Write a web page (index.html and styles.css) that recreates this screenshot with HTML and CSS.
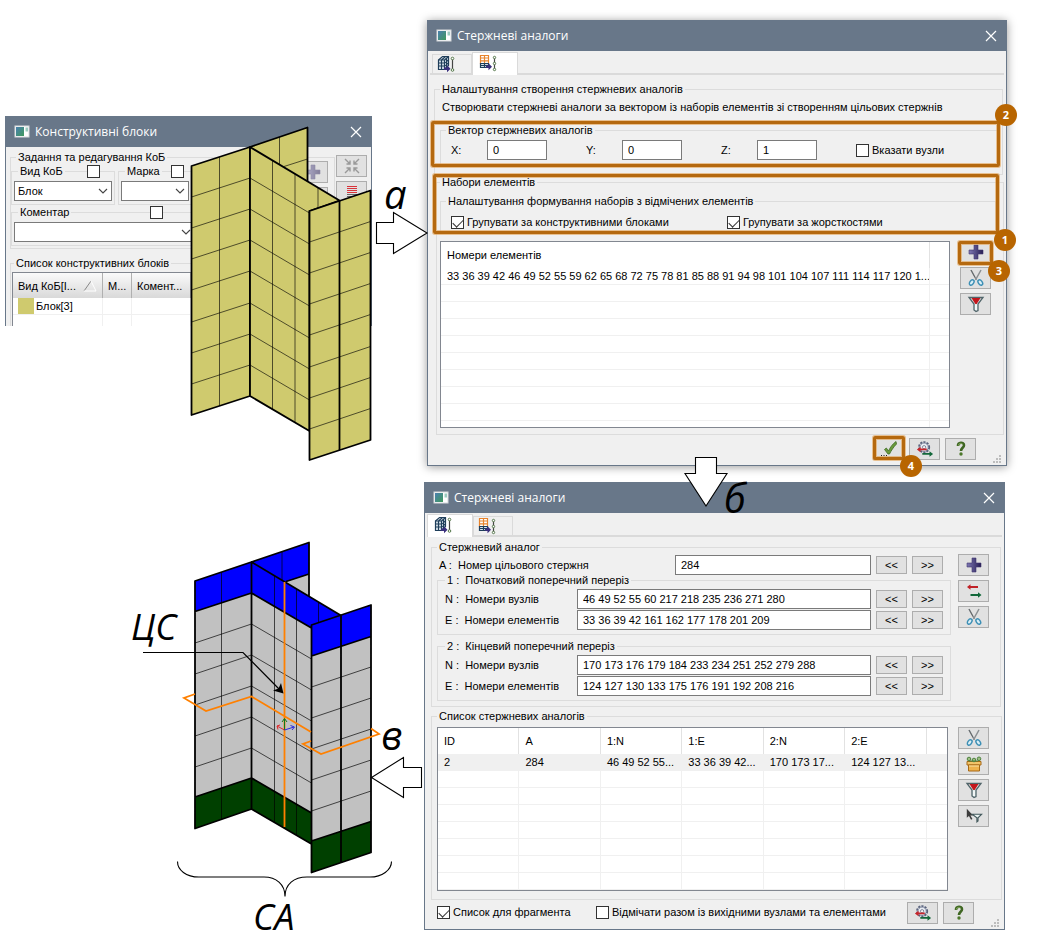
FILE: index.html
```html
<!DOCTYPE html>
<html lang="uk">
<head>
<meta charset="utf-8">
<title>Стержневі аналоги</title>
<link rel="stylesheet" href="styles.css">
</head>
<body>
<svg class="defs" aria-hidden="true">
  <defs>
    <linearGradient id="g-app" x1="0" y1="0" x2="1" y2="1"><stop offset="0" stop-color="#4a7fb0"/><stop offset="1" stop-color="#3f9a5c"/></linearGradient>
    <linearGradient id="g-plus" x1="0" y1="0" x2="1" y2="0"><stop offset="0" stop-color="#7f79b4"/><stop offset="1" stop-color="#251c52"/></linearGradient>
    <symbol id="i-app" viewBox="0 0 16 14"><rect x="1" y="1" width="14" height="11" fill="#fff" stroke="#d5d9dc"/><rect x="2" y="2" width="8" height="9" fill="url(#g-app)"/><rect x="11.500" y="2.500" width="2.500" height="4" fill="#9ccbc0"/></symbol>
    <symbol id="i-close" viewBox="0 0 12 12"><path d="M1 1L11 11M11 1L1 11" stroke="#fff" stroke-width="1.200" fill="none"/></symbol>
    <symbol id="i-plus" viewBox="0 0 18 18"><path d="M7 2h4v5h5v4h-5v5H7v-5H2V7h5z" fill="url(#g-plus)" stroke="#40376f" stroke-width=".6"/></symbol>
    <symbol id="i-cut" viewBox="0 0 18 18"><path d="M4 1l5.500 10M14 1L8.500 11" stroke="#8b8f92" stroke-width="1.500" fill="none"/><path d="M4 1l4 7.500" stroke="#4f5558" stroke-width=".7"/><ellipse cx="4.700" cy="13.500" rx="1.900" ry="3" transform="rotate(35 4.700 13.500)" fill="#d9eef6" stroke="#3d8fb5" stroke-width="1.500"/><ellipse cx="13.300" cy="13.500" rx="1.900" ry="3" transform="rotate(-35 13.300 13.500)" fill="#d9eef6" stroke="#3d8fb5" stroke-width="1.500"/></symbol>
    <symbol id="i-funnel" viewBox="0 0 18 18"><path d="M2 2.500h14L11 9v6.500L9 16.500 7 15V9z" fill="#e3eded" stroke="#51656a" stroke-width="1.300"/><path d="M4.500 3h9L9.700 9H8.300z" fill="#c3161c"/><path d="M9 10v5" stroke="#fff"/></symbol>
    <symbol id="i-ok" viewBox="0 0 18 18"><path d="M4.500 9.500l1.800-1.500 2.200 3C10 7.500 12.500 4 16 1.500l.5 2.500C13.500 7 11 11 9.500 14H8z" fill="#6a9a3c" stroke="#3c6b23" stroke-width=".8"/><path d="M1 15.500h1M3.500 15.500h1M6 15.500h1" stroke="#222" stroke-width="1"/></symbol>
    <symbol id="i-gear" viewBox="0 0 20 18"><circle cx="9" cy="7" r="5.500" fill="#dfe3ec" stroke="#59627c" stroke-width="2.400" stroke-dasharray="2.300 1.200"/><circle cx="9" cy="7" r="4.600" fill="#e9ecf2" stroke="#78819a"/><circle cx="9" cy="7" r="1.800" fill="#f6f6f6" stroke="#59627c" stroke-width=".8"/><path d="M1 9.500l4-3v2h7v2H5v2z" fill="#c7252b"/><path d="M19 14.500l-4-3v2H7v2h8v2z" fill="#13683a"/></symbol>
    <symbol id="i-help" viewBox="0 0 18 18"><path d="M6 6C5.800 1.800 12 1.800 12 5.200c0 2.600-3 2.600-3 5.800" fill="none" stroke="#3f6623" stroke-width="2.600"/><path d="M6.300 5.500C6.500 3 9.500 3 10.500 4" fill="none" stroke="#93bb64" stroke-width=".8"/><circle cx="9" cy="14" r="1.700" fill="#4b772a"/></symbol>
    <symbol id="i-swap" viewBox="0 0 18 18"><path d="M2 5l3.500-2.800V4.100H13v1.800H5.500v1.900z" fill="#c02127"/><path d="M16.500 13L13 10.200v1.900H5.500v1.800H13v1.900z" fill="#12683a"/></symbol>
    <symbol id="i-box" viewBox="0 0 18 18"><path d="M2 6.500h14v3.500H2z" fill="#f3c469" stroke="#a76916"/><path d="M3.500 10h11v6h-11z" fill="#efb24c" stroke="#a76916"/><path d="M4 11h10" stroke="#fbe3a4"/><circle cx="4" cy="4" r="1.800" fill="#9cbf80" stroke="#4f8240"/><circle cx="9" cy="5" r="1.800" fill="#9cbf80" stroke="#4f8240"/><circle cx="14" cy="3.800" r="1.800" fill="#9cbf80" stroke="#4f8240"/><path d="M4 6h9" stroke="#4f8240"/></symbol>
    <symbol id="i-pick" viewBox="0 0 20 18"><path d="M2 1v10l2.400-2 2.300 4.300 1.600-.9L6 8.500h3z" fill="#3d3d3d"/><path d="M8 7h10.500L14.500 11v3.500l-1.300 1V11z" fill="#e9f2f1" stroke="#43595c" stroke-width="1.200"/></symbol>
    <symbol id="i-lines" viewBox="0 0 18 18"><path d="M4 3.500h10M4 5.500h10M4 7.500h10M4 9.500h10" stroke="#d8343a"/><path d="M4 11.500h10M4 13.500h10M4 15.500h10" stroke="#666"/></symbol>
    <symbol id="i-collapse" viewBox="0 0 18 18"><path d="M2 2l5 5M3.500 7H7V3.500M16 2l-5 5M14.500 7H11V3.500M2 16l5-5M3.500 11H7v3.500M16 16l-5-5M14.500 11H11v3.500" fill="none" stroke="#999" stroke-width="1.400"/></symbol>
    <symbol id="i-tab-block" viewBox="0 0 18 18"><path d="M1.500 5l4-3.500h6v9l-4 4h-6z" fill="#dce6ee" stroke="#1f3e5a" stroke-width="1.200"/><path d="M7.500 14.500V5h-6M7.500 5l4-3.500M1.500 8h6l4-3M1.500 11h6l4-3M4.500 5v9.500M4.500 5l4-3.500M9.500 3.500v9" fill="none" stroke="#1f3e5a" stroke-width="1.200"/><path d="M7 12.500h3v-2.300l3.500 3.500-3.500 3.500V15H7z" fill="#3a2f7c"/><path d="M15.500 4v11" stroke="#444" stroke-width="1.200"/><circle cx="15.500" cy="3.500" r="1.300" fill="#fff" stroke="#55784a"/><circle cx="15.500" cy="15" r="1.300" fill="#fff" stroke="#55784a"/></symbol>
    <symbol id="i-tab-set" viewBox="0 0 18 18"><path d="M1.500 1.500h8v8h-8zM1.500 4h8M1.500 6.800h8M5.500 1.500v8" fill="#fff" stroke="#e8842c" stroke-width="1.200"/><path d="M1.500 9.500h8v4h-8zM1.500 11.500h8M5.500 9.500v4" fill="#d8e4ec" stroke="#1f3e5a" stroke-width="1.200"/><path d="M7 11.500h2.500V9.200l3.500 3.500-3.500 3.500V14H7z" fill="#3a2f7c"/><path d="M15.500 3v12" stroke="#444" stroke-width="1.200"/><circle cx="15.500" cy="3.500" r="1.200" fill="#fff" stroke="#55784a"/><circle cx="15.500" cy="9.500" r="1.200" fill="#fff" stroke="#55784a"/><circle cx="15.500" cy="15.500" r="1.200" fill="#fff" stroke="#55784a"/></symbol>
    <symbol id="i-chev" viewBox="0 0 10 6"><path d="M1 1l4 4 4-4" fill="none" stroke="#444" stroke-width="1.100"/></symbol>
    <symbol id="i-grip" viewBox="0 0 9 9"><path d="M6 0h2v2H6zM3 3h2v2H3zM6 3h2v2H6zM0 6h2v2H0zM3 6h2v2H3zM6 6h2v2H6z" fill="#bdbdbd"/></symbol>
  </defs>
</svg>

<main class="canvas">

  <section class="window window-blocks" aria-label="Конструктивні блоки">
    <header class="titlebar"><svg class="app-icon"><use href="#i-app"/></svg><h2>Конструктивні блоки</h2><button class="close" aria-label="Закрити"><svg><use href="#i-close"/></svg></button></header>
    <div class="blocks-body">
      <div class="blocks-top">
        <fieldset class="group blocks-edit">
          <legend>Задання та редагування КоБ</legend>
          <div class="blocks-filters">
            <div class="blocks-pair">
              <fieldset class="group mini mini-kind"><legend><label for="kind-on">Вид КоБ</label></legend><input class="tick corner" id="kind-on" type="checkbox">
                <div class="combo"><select aria-label="Вид КоБ"><option>Блок</option></select><svg><use href="#i-chev"/></svg></div></fieldset>
              <fieldset class="group mini mini-mark"><legend><label for="mark-on">Марка</label></legend><input class="tick corner" id="mark-on" type="checkbox">
                <div class="combo"><select aria-label="Марка"><option></option></select><svg><use href="#i-chev"/></svg></div></fieldset>
            </div>
            <fieldset class="group mini mini-note"><legend><label for="note-on">Коментар</label></legend><input class="tick corner" id="note-on" type="checkbox">
              <div class="combo"><select aria-label="Коментар"><option></option></select><svg><use href="#i-chev"/></svg></div></fieldset>
          </div>
          <div class="tools faded"><button class="tool" aria-label="Додати"><svg><use href="#i-plus"/></svg></button><button class="tool" aria-label="Змінити"></button></div>
        </fieldset>
        <div class="tools blocks-tools"><button class="tool" aria-label="Згорнути" disabled><svg><use href="#i-collapse"/></svg></button><button class="tool" aria-label="Список"><svg><use href="#i-lines"/></svg></button></div>
      </div>
      <fieldset class="group blocks-list">
        <legend>Список конструктивних блоків</legend>
        <div class="list">
          <table class="blocks-table">
            <colgroup><col class="c-kind"><col class="c-mark"><col class="c-note"><col></colgroup>
            <thead><tr><th><span class="sortable">Вид КоБ[І...<svg class="sort" viewBox="0 0 14 12"><path d="M1 11L8 1" stroke="#888" fill="none"/><path d="M8 1l5 10H1" stroke="#fff" fill="none"/></svg></span></th><th>М...</th><th>Комент...</th><th></th></tr></thead>
            <tbody><tr><td><span class="swatch"></span>Блок[3]</td><td></td><td></td><td></td></tr><tr><td></td><td></td><td></td><td></td></tr></tbody>
          </table>
        </div>
      </fieldset>
    </div>
  </section>

  <section class="window window-create" aria-label="Стержневі аналоги: створення">
    <header class="titlebar"><svg class="app-icon"><use href="#i-app"/></svg><h2>Стержневі аналоги</h2><button class="close" aria-label="Закрити"><svg><use href="#i-close"/></svg></button></header>
    <nav class="tabs"><button class="tab" aria-label="Аналог"><svg><use href="#i-tab-block"/></svg></button><button class="tab active" aria-label="Створення"><svg><use href="#i-tab-set"/></svg></button></nav>
    <fieldset class="group create-setup">
      <legend>Налаштування створення стержневих аналогів</legend>
      <p>Створювати стержневі аналоги за вектором із наборів елементів зі створенням цільових стержнів</p>
      <fieldset class="group create-vector">
        <legend>Вектор стержневих аналогів</legend>
        <div class="vector-row">
          <div class="axis"><label for="vx">X:</label><input id="vx" type="text" value="0"></div>
          <div class="axis"><label for="vy">Y:</label><input id="vy" type="text" value="0"></div>
          <div class="axis"><label for="vz">Z:</label><input id="vz" type="text" value="1"></div>
          <label class="check"><input class="tick" type="checkbox">Вказати вузли</label>
        </div>
      </fieldset>
    </fieldset>
    <fieldset class="group create-sets">
      <legend>Набори елементів</legend>
      <fieldset class="group create-grouping">
        <legend>Налаштування формування наборів з відмічених елементів</legend>
        <div class="grouping-row">
          <label class="check"><input class="tick" type="checkbox" checked>Групувати за конструктивними блоками</label>
          <label class="check"><input class="tick" type="checkbox" checked>Групувати за жорсткостями</label>
        </div>
      </fieldset>
      <div class="list-row">
        <div class="list">
          <table class="sets-table">
            <colgroup><col><col class="c-rest"></colgroup>
            <thead><tr><th>Номери елементів</th><th></th></tr></thead>
            <tbody><tr><td>33 36 39 42 46 49 52 55 59 62 65 68 72 75 78 81 85 88 91 94 98 101 104 107 111 114 117 120 1...</td><td></td></tr>
            <tr><td></td><td></td></tr><tr><td></td><td></td></tr><tr><td></td><td></td></tr><tr><td></td><td></td></tr><tr><td></td><td></td></tr><tr><td></td><td></td></tr><tr><td></td><td></td></tr><tr><td></td><td></td></tr><tr><td></td><td></td></tr></tbody>
          </table>
        </div>
        <div class="tools"><button class="tool" aria-label="Додати"><svg><use href="#i-plus"/></svg></button><button class="tool" aria-label="Вилучити"><svg><use href="#i-cut"/></svg></button><button class="tool" aria-label="Фільтр"><svg><use href="#i-funnel"/></svg></button></div>
      </div>
    </fieldset>
    <footer class="footer"><button class="tool" aria-label="Застосувати"><svg><use href="#i-ok"/></svg></button><button class="tool" aria-label="Параметри"><svg><use href="#i-gear"/></svg></button><button class="tool" aria-label="Довідка"><svg><use href="#i-help"/></svg></button></footer>
    <svg class="grip"><use href="#i-grip"/></svg>
  </section>

  <section class="window window-edit" aria-label="Стержневі аналоги: редагування">
    <header class="titlebar"><svg class="app-icon"><use href="#i-app"/></svg><h2>Стержневі аналоги</h2><button class="close" aria-label="Закрити"><svg><use href="#i-close"/></svg></button></header>
    <nav class="tabs"><button class="tab active" aria-label="Аналог"><svg><use href="#i-tab-block"/></svg></button><button class="tab" aria-label="Створення"><svg><use href="#i-tab-set"/></svg></button></nav>
    <fieldset class="group edit-analog">
      <legend>Стержневий аналог</legend>
      <div class="edit-columns">
        <div class="edit-fields">
          <div class="field field-target"><label for="fa">A :&nbsp; Номер цільового стержня</label><input id="fa" type="text" value="284"><button class="step">&lt;&lt;</button><button class="step">&gt;&gt;</button></div>
          <fieldset class="group section-start"><legend>1 :&nbsp; Початковий поперечний переріз</legend>
            <div class="field"><label for="f1n">N :&nbsp; Номери вузлів</label><input id="f1n" type="text" value="46 49 52 55 60 217 218 235 236 271 280"><button class="step">&lt;&lt;</button><button class="step">&gt;&gt;</button></div>
            <div class="field"><label for="f1e">E :&nbsp; Номери елементів</label><input id="f1e" type="text" value="33 36 39 42 161 162 177 178 201 209"><button class="step">&lt;&lt;</button><button class="step">&gt;&gt;</button></div>
          </fieldset>
          <fieldset class="group section-end"><legend>2 :&nbsp; Кінцевий поперечний переріз</legend>
            <div class="field"><label for="f2n">N :&nbsp; Номери вузлів</label><input id="f2n" type="text" value="170 173 176 179 184 233 234 251 252 279 288"><button class="step">&lt;&lt;</button><button class="step">&gt;&gt;</button></div>
            <div class="field"><label for="f2e">E :&nbsp; Номери елементів</label><input id="f2e" type="text" value="124 127 130 133 175 176 191 192 208 216"><button class="step">&lt;&lt;</button><button class="step">&gt;&gt;</button></div>
          </fieldset>
        </div>
        <div class="tools"><button class="tool" aria-label="Додати"><svg><use href="#i-plus"/></svg></button><button class="tool" aria-label="Замінити"><svg><use href="#i-swap"/></svg></button><button class="tool" aria-label="Вилучити"><svg><use href="#i-cut"/></svg></button></div>
      </div>
    </fieldset>
    <fieldset class="group edit-list">
      <legend>Список стержневих аналогів</legend>
      <div class="list-row">
        <div class="list">
          <table class="analog-table">
            <colgroup><col class="c-data"><col class="c-data"><col class="c-data"><col class="c-data"><col class="c-data"><col class="c-data"><col></colgroup>
            <thead><tr><th>ID</th><th>A</th><th>1:N</th><th>1:E</th><th>2:N</th><th>2:E</th><th></th></tr></thead>
            <tbody><tr class="selected"><td>2</td><td>284</td><td>46 49 52 55...</td><td>33 36 39 42...</td><td>170 173 17...</td><td>124 127 13...</td><td></td></tr>
            <tr><td></td><td></td><td></td><td></td><td></td><td></td><td></td></tr><tr><td></td><td></td><td></td><td></td><td></td><td></td><td></td></tr><tr><td></td><td></td><td></td><td></td><td></td><td></td><td></td></tr><tr><td></td><td></td><td></td><td></td><td></td><td></td><td></td></tr><tr><td></td><td></td><td></td><td></td><td></td><td></td><td></td></tr><tr><td></td><td></td><td></td><td></td><td></td><td></td><td></td></tr><tr><td></td><td></td><td></td><td></td><td></td><td></td><td></td></tr><tr><td></td><td></td><td></td><td></td><td></td><td></td><td></td></tr></tbody>
          </table>
        </div>
        <div class="tools"><button class="tool" aria-label="Вилучити"><svg><use href="#i-cut"/></svg></button><button class="tool" aria-label="Пакувати"><svg><use href="#i-box"/></svg></button><button class="tool" aria-label="Фільтр"><svg><use href="#i-funnel"/></svg></button><button class="tool" aria-label="Вказати"><svg><use href="#i-pick"/></svg></button></div>
      </div>
    </fieldset>
    <footer class="footer">
      <label class="check check-fragment"><input class="tick" type="checkbox" checked>Список для фрагмента</label>
      <label class="check check-source"><input class="tick" type="checkbox">Відмічати разом із вихідними вузлами та елементами</label>
      <button class="tool" aria-label="Параметри"><svg><use href="#i-gear"/></svg></button><button class="tool" aria-label="Довідка"><svg><use href="#i-help"/></svg></button>
    </footer>
    <svg class="grip"><use href="#i-grip"/></svg>
  </section>

  <svg class="scene" viewBox="0 0 1040 949" aria-hidden="true">
    <defs>
      <path id="rib-l" d="M191.500 166L250 147L309.500 182"/>
      <path id="rib-r" d="M309.500 211L370.500 190.500"/>
      <path id="seg-l" d="M195 581L251.500 562L311.500 597"/>
      <path id="seg-r" d="M311.500 625L371 605"/>
    </defs>
    <!-- solid block -->
    <g fill="#cfca6e" stroke="#000" stroke-width="1.800" stroke-linejoin="round">
      <path d="M250 147L307.500 127.500V181.500z" stroke="none"/>
      <path d="M250 147L307.500 127.500V181.500" fill="none"/>
      <path d="M191.500 166L250 147V396L191.500 415z"/>
      <path d="M250 147L339.500 200.500L309.500 211V431L250 396z"/>
      <path d="M309.500 211L370.500 190.500V440L309.500 460z"/>
      <path d="M339.500 200.500V450"/>
    </g>
    <g fill="none" stroke="#000" stroke-opacity=".7" stroke-width=".9">
      <path d="M219.500 157V406M279.500 137V165M284 166.500L307.500 159M272.500 161V409M295 174V422M318 187V208"/>
      <use href="#rib-l" y="31"/><use href="#rib-l" y="62"/><use href="#rib-l" y="93"/><use href="#rib-l" y="124"/><use href="#rib-l" y="156"/><use href="#rib-l" y="187"/><use href="#rib-l" y="218"/>
      <use href="#rib-r" y="31"/><use href="#rib-r" y="62"/><use href="#rib-r" y="93"/><use href="#rib-r" y="124"/><use href="#rib-r" y="156"/><use href="#rib-r" y="187"/><use href="#rib-r" y="218"/>
    </g>
    <!-- bar analog -->
    <g fill="#c1c1c1">
      <path d="M251.500 562L309 542.500V596z" fill="#00f"/><path d="M285 582L309 574V596z"/>
      <path d="M195 581L251.500 562L341 615.500L311.500 625L371 605V852.500L311.500 872.500V844L251.500 809L195 828.500z"/>
    </g>
    <g fill="#00f"><path d="M195 581L251.500 562L341 615.500L371 605V636.500L311.500 656V628L251.500 593L195 611.500z"/></g>
    <g fill="#004000"><path d="M195 797L251.500 778L311.500 813V844L251.500 809L195 828.500zM311.500 841L371 821.500V852.500L311.500 872.500z"/></g>
    <g fill="none" stroke="#000" stroke-opacity=".75" stroke-width=".9">
      <path d="M221.500 572V819M282 552V580M274.500 576V822M296.500 589V835M318.500 602V622"/>
      <use href="#seg-l" y="62"/><use href="#seg-l" y="93"/><use href="#seg-l" y="124"/><use href="#seg-l" y="155"/><use href="#seg-l" y="186"/>
      <use href="#seg-r" y="62"/><use href="#seg-r" y="93"/><use href="#seg-r" y="124"/><use href="#seg-r" y="155"/><use href="#seg-r" y="186"/>
    </g>
    <g fill="none" stroke="#000" stroke-width="1.800" stroke-linejoin="round">
      <path d="M251.500 562L309 542.500V596M286 581.500L309 574M195 581L251.500 562V809L195 828.500zM251.500 562L341 615.500M311.500 844L251.500 809M195 611.500L251.500 593L311.500 628M195 797L251.500 778L311.500 813M311.500 625L371 605V852.500L311.500 872.500zM341 615V862.500M311.500 656L371 636.500M311.500 841L371 821.500"/>
    </g>
    <g fill="none" stroke="#ff8000" stroke-width="1.800">
      <path d="M284.500 582V827M195 694L184 698L206 711L251.500 696.500L311 732M311 741L303 744L321 754L379 734L371 728.500"/>
    </g>
    <g fill="none" stroke-width="1">
      <path d="M284.500 730V719M282 722l2.500-3.500L287 722" stroke="#0b7a1c"/><path d="M284.500 730L277 726M280 725l-3 1 1 3.500" stroke="#e0282c"/><path d="M284.500 730L294 727M290.500 725.500l4 1.500-2.500 3" stroke="#2a2ae0"/>
    </g>
    <path d="M143 652.500H243L280 690" fill="none" stroke="#000" stroke-width="1.200"/><path d="M283.500 693.500L273 690.500L278.500 688.500L281 683z"/>
    <path d="M177.500 861.500C177.500 870 186 877 199 877H264C276 877 285 884 285 896.500C285 884 294 877 307 877H370C382 877 391.500 870 391.500 861.500" fill="none" stroke="#000" stroke-width="1.100"/>
    <g fill="#fff" stroke="#000" stroke-width="1.100">
      <path d="M376.500 222.500H393.500V212.500L427 233L393.500 253.500V243.500H376.500z"/>
      <path d="M695.500 457.500H716.500V473.500H727L706 506L685 473.500H695.500z"/>
      <path d="M421.500 767.500H403.500V757.500L371.500 777.500L403.500 797.500V787.500H421.500z"/>
    </g>
  </svg>

  <span class="mark mark-a">а</span>
  <span class="mark mark-b">б</span>
  <span class="mark mark-v">в</span>
  <span class="mark mark-cs">ЦС</span>
  <span class="mark mark-sa">СА</span>

  <div class="frame frame-vector"></div>
  <div class="frame frame-sets"></div>
  <div class="frame frame-add"></div>
  <div class="frame frame-ok"></div>
  <span class="badge badge-1">1</span>
  <span class="badge badge-2">2</span>
  <span class="badge badge-3">3</span>
  <span class="badge badge-4">4</span>
</main>
</body>
</html>
```

FILE: styles.css
```css
* { box-sizing: border-box; }

body {
  margin: 0;
  background: #fff;
  color: #000;
  font: 11px/14px "Liberation Sans", Arial, sans-serif;
}

.defs { position: absolute; width: 0; height: 0; }

.canvas { position: relative; min-height: 949px; }

button, input, select { font: inherit; color: inherit; margin: 0; }
p { margin: 0; }

/* windows */
.window {
  position: absolute;
  background: #f0f0f0;
  border: 1px solid #687789;
}
.window-blocks { left: 5px; top: 116px; width: 367px; height: 210px; overflow: hidden; border-bottom: 0; }
.window-create { left: 427px; top: 20px; width: 580px; box-shadow: 0 1px 9px rgba(0, 0, 0, .4); }
.window-edit { left: 424px; top: 482px; width: 581px; }

.titlebar {
  display: flex;
  align-items: center;
  height: 30px;
  padding: 0 9px 0 8px;
  background: #687789;
  color: #fff;
}
.titlebar h2 { flex: 1; margin: 0 0 0 5px; font: 12px/16px "Open Sans", "Noto Sans", sans-serif; }
.app-icon { width: 16px; height: 14px; }
.close { display: flex; padding: 0; border: 0; background: none; }
.close svg { width: 12px; height: 12px; }

/* tab strip */
.tabs {
  display: flex;
  align-items: flex-end;
  height: 24px;
  margin: 0 2px;
  padding-left: 2px;
  border-bottom: 2px solid #dadada;
}
.tab {
  display: flex;
  width: 40px;
  height: 19px;
  padding: 0 4px;
  border: 1px solid #dadada;
  border-bottom: 0;
  background: #f0f0f0;
}
.tab.active { width: 46px; height: 23px; margin-bottom: -2px; padding: 1px 6px 0; background: #fff; }
.tab svg { width: 18px; height: 18px; }

/* group boxes */
.group {
  min-width: 0;
  margin: 0;
  padding: 0;
  border: 1px solid #dcdcdc;
}
.group > legend { height: 14px; padding: 0 2px; }

/* controls */
.tick {
  appearance: none;
  flex: none;
  width: 13px;
  height: 13px;
  border: 1px solid #333;
  background: #fff;
}
.tick:checked::before {
  content: "";
  display: block;
  width: 9px;
  height: 5px;
  margin: 2px 0 0 1px;
  border: solid #333;
  border-width: 0 0 1px 1px;
  transform: rotate(-45deg);
}
.check { display: flex; align-items: center; gap: 3px; white-space: nowrap; }

input[type="text"] {
  min-width: 0;
  height: 20px;
  padding: 0 5px;
  border: 1px solid #7a7a7a;
  background: #fff;
}

.tools { display: flex; flex-direction: column; gap: 4px; }
.tool {
  display: flex;
  align-items: center;
  justify-content: center;
  width: 31px;
  height: 22px;
  padding: 0;
  border: 1px solid #adadad;
  background: #e1e1e1;
}
.tool svg { width: 18px; height: 18px; }

.step {
  width: 31px;
  height: 18px;
  padding: 0;
  border: 1px solid #adadad;
  background: #e1e1e1;
  line-height: 14px;
}

/* lists */
.list { overflow: hidden; border: 1px solid #828790; background: #fff; }
.list-row { display: flex; gap: 10px; }
.list-row .list { flex: 1; }
table { width: 100%; border-collapse: separate; border-spacing: 0; table-layout: fixed; }
th, td {
  overflow: hidden;
  padding: 0 6px;
  border: solid #f0f0f0;
  border-width: 0 1px 1px 0;
  font-weight: normal;
  text-align: left;
  white-space: nowrap;
}
th { height: 26px; border-color: #e2e2e2; border-bottom: 0; }
td { height: 17px; line-height: 16px; }
th:last-child, td:last-child { border-right: 0; }

.footer { display: flex; align-items: flex-start; justify-content: flex-end; gap: 5px; height: 30px; padding: 3px 30px 0 0; }
.grip { position: absolute; right: 4px; bottom: 1px; width: 9px; height: 9px; }

/* blocks window */
.blocks-body { padding: 3px 4px 0 4px; }
.blocks-top { display: flex; justify-content: space-between; }
.blocks-edit { display: flex; justify-content: space-between; width: 325px; height: 99px; padding-right: 6px; }
.blocks-edit > legend { margin-left: 5px; }
.blocks-edit > .tools { margin-top: -3px; }
.faded svg { opacity: .5; }
.blocks-filters { width: 200px; }
.blocks-pair { display: flex; gap: 3px; }
.mini { position: relative; height: 41px; padding: 3px 2px 0; }
.mini > legend { margin-left: 4px; }
.mini-kind { width: 104px; }
.mini-mark { width: 74px; }
.mini-note { width: 187px; }
.corner { position: absolute; top: -13px; right: 14px; }
.mini-mark .corner { right: 7px; }
.mini-note .corner { right: 34px; }
.combo { position: relative; }
.combo select { appearance: none; display: block; width: 100%; height: 20px; padding: 0 3px; border: 1px solid #7a7a7a; border-radius: 0; background: #fff; }
.combo svg { position: absolute; right: 4px; top: 7px; width: 10px; height: 6px; pointer-events: none; }
.blocks-tools { margin-top: 5px; }
.blocks-list { height: 90px; margin-top: 7px; padding: 2px 0 0 1px; }
.blocks-list > legend { margin-left: 2px; }
.blocks-table .c-kind { width: 90px; }
.blocks-table .c-mark { width: 29px; }
.blocks-table .c-note { width: 59px; }
.blocks-table th { height: 25px; padding: 0 5px; border-color: #b0b0b0; background: linear-gradient(#fafafa, #d9d9d9); }
.blocks-table td { padding: 0 5px; }
.sortable { display: flex; justify-content: space-between; align-items: center; }
.sort { width: 14px; height: 12px; }
.swatch { display: inline-block; width: 16px; height: 16px; margin-right: 2px; background: #cfca6e; vertical-align: top; }

/* creation window */
.create-setup { margin: 7px 3px 0 6px; padding: 4px 4px 8px 5px; }
.create-setup > p { padding-left: 2px; }
.create-vector { margin-top: 9px; padding: 3px 0 5px; }
.create-vector > legend, .create-grouping > legend { margin-left: 5px; }
.vector-row { display: flex; gap: 39px; align-items: center; padding-left: 10px; }
.axis { display: flex; align-items: center; justify-content: space-between; width: 96px; }
.axis input { width: 60px; }
.create-sets { margin: 0 2px 0 8px; padding: 5px 0 6px 3px; }
.create-grouping { margin-right: 7px; padding: 7px 0 4px; border-bottom-color: transparent; }
.grouping-row { display: flex; padding-left: 10px; }
.grouping-row .check:first-child { flex: 0 0 276px; }
.create-sets .list-row { margin-top: 7px; padding-right: 12px; }
.create-sets .list { height: 187px; }
.sets-table .c-rest { width: 19px; }

/* editing window */
.window-edit .tabs { padding-left: 0; }
.edit-analog { margin: 3px 3px 0 6px; padding: 1px 11px 5px 5px; }
.edit-columns { display: flex; gap: 7px; }
.edit-columns > .tools { margin-top: -1px; }
.edit-fields { flex: 1; }
.field { display: flex; align-items: center; height: 20px; padding-right: 7px; }
.field label { flex: 1; }
.field input { width: 294px; margin-right: 5px; }
.field .step + .step { margin-left: 5px; }
.field-target { padding: 0 8px 0 2px; }
.field-target input { width: 196px; }
.section-start, .section-end { padding: 2px 0 4px 7px; }
.section-start { margin-top: -2px; }
.section-end { margin-top: 4px; }
.section-start .field + .field, .section-end .field + .field { margin-top: 1px; }
.edit-list { margin: 2px 2px 0 6px; padding: 4px 12px 8px 5px; }
.edit-list .list { height: 164px; }
.analog-table .c-data { width: 16%; }
.selected td { background: #f0f0f0; }
.window-edit .footer { height: 29px; padding: 2px 30px 0 12px; }
.window-edit .footer .check { height: 20px; }
.check-fragment { width: 154px; }
.check-source { margin-right: auto; }

/* figure overlay */
.scene { position: absolute; left: 0; top: 0; width: 1040px; height: 949px; pointer-events: none; }
.mark { position: absolute; font: italic 40px/40px "Open Sans", "Noto Sans", sans-serif; }
.mark-a { left: 384px; top: 174px; }
.mark-b { left: 724px; top: 478px; }
.mark-v { left: 381px; top: 715px; }
.mark-cs { left: 131px; top: 607px; font-size: 36px; }
.mark-sa { left: 253px; top: 897px; font-size: 36px; }

.frame { position: absolute; border: 3px solid #b5690f; border-radius: 2px; box-shadow: 0 0 0 1px rgba(226, 160, 80, .6), inset 0 0 0 1px rgba(226, 160, 80, .6); pointer-events: none; }
.frame-vector { left: 431px; top: 121px; width: 569px; height: 46px; }
.frame-sets { left: 433px; top: 174px; width: 566px; height: 60px; }
.frame-add { left: 958px; top: 241px; width: 35px; height: 24px; }
.frame-ok { left: 873px; top: 436px; width: 32px; height: 24px; }

.badge {
  position: absolute;
  width: 22px;
  height: 22px;
  border-radius: 50%;
  background: #b86500;
  color: #fff;
  font: bold 11px/22px "Open Sans", sans-serif;
  text-align: center;
}
.badge-1 { left: 994px; top: 229px; }
.badge-2 { left: 995px; top: 104px; }
.badge-3 { left: 988px; top: 260px; }
.badge-4 { left: 900px; top: 455px; }
```
